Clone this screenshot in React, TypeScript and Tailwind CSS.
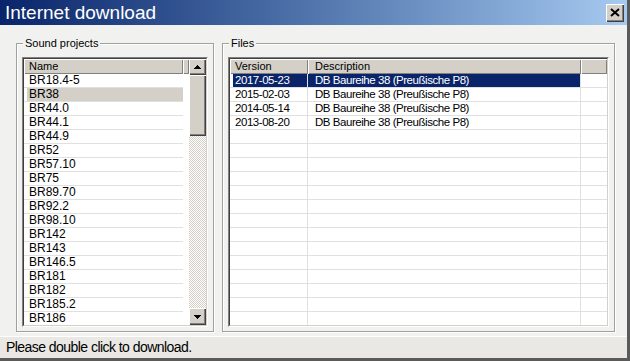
const PROJECTS = [
    'BR18.4-5', 'BR38', 'BR44.0', 'BR44.1', 'BR44.9', 'BR52', 'BR57.10', 'BR75', 'BR89.70',
    'BR92.2', 'BR98.10', 'BR142', 'BR143', 'BR146.5', 'BR181', 'BR182', 'BR185.2', 'BR186',
];

const FILES = [
    { version: '2017-05-23', desc: 'DB Baureihe 38 (Preußische P8)' },
    { version: '2015-02-03', desc: 'DB Baureihe 38 (Preußische P8)' },
    { version: '2014-05-14', desc: 'DB Baureihe 38 (Preußische P8)' },
    { version: '2013-08-20', desc: 'DB Baureihe 38 (Preußische P8)' },
];

// Classic raised bevel used by header cells and scroll buttons
const RAISED = 'bg-[#d4d0c8] shadow-[inset_1px_1px_0_#fff,inset_-1px_-1px_0_#404040,inset_-2px_-2px_0_#808080]';
const HEADER_CELL = 'bg-[#d4d0c8] shadow-[inset_1px_1px_0_#fff,inset_-1px_-1px_0_#808080] text-[11px] leading-[15px] text-black';

const Arrow = ({ up }: { up?: boolean }) => (
    <svg width="7" height="4" viewBox="0 0 7 4" shapeRendering="crispEdges">
        <polygon points={up ? '3.5,0 7,4 0,4' : '0,0 7,0 3.5,4'} fill="#000" />
    </svg>
);

const GroupBox = ({ label, className, children }: { label: string; className?: string; children: React.ReactNode }) => (
    <div className={`relative min-h-0 flex flex-col border border-[#a0a0a0] shadow-[inset_1px_1px_0_#fff,1px_1px_0_#fff] pt-[13px] pb-[4px] pl-[5px] ${className ?? ''}`}>
        <span className="absolute -top-[7px] left-[6px] px-[2px] bg-[#f1f1ef] text-[11px] leading-[13px] text-black">
            {label}
        </span>
        {children}
    </div>
);

const ListFrame = ({ children }: { children: React.ReactNode }) => (
    <div className="flex-1 min-h-0 flex border border-t-[#808080] border-l-[#808080] border-b-white border-r-white overflow-hidden">
        <div className="flex-1 min-h-0 flex border border-t-[#404040] border-l-[#404040] border-b-[#d4d0c8] border-r-[#d4d0c8] bg-white overflow-hidden">
            {children}
        </div>
    </div>
);

const SoundProjects = () => (
    <ListFrame>
        <div className="flex-1 min-h-0 flex flex-col overflow-hidden">
            <div className="flex h-[15px] shrink-0">
                <div className={`w-[159px] pl-[5px] ${HEADER_CELL}`}>Name</div>
                <div className={`flex-1 ${HEADER_CELL}`} />
            </div>
            {PROJECTS.map((name, i) => (
                <div key={name} className="flex h-[14px] shrink-0">
                    <div className="w-[159px] flex border-b border-[#e0e0e0]">
                        <div className={`ml-[3px] flex-1 pl-[2px] text-[12px] leading-[13px] text-black ${i === 1 ? 'bg-[#d4d0c8]' : ''}`}>
                            {name}
                        </div>
                    </div>
                </div>
            ))}
        </div>
        {/* vertical scrollbar */}
        <div className="w-[17px] min-h-0 flex flex-col shrink-0">
            <div className={`h-[16px] shrink-0 flex items-center justify-center ${RAISED}`}>
                <Arrow up />
            </div>
            <div className={`h-[61px] shrink-0 ${RAISED}`} />
            <div className="flex-1 bg-[repeating-conic-gradient(#d4d0c8_0%_25%,#fff_0%_50%)] bg-[length:2px_2px]" />
            <div className={`h-[17px] shrink-0 flex items-center justify-center ${RAISED}`}>
                <Arrow />
            </div>
        </div>
    </ListFrame>
);

const Files = () => (
    <ListFrame>
        <div className="flex-1 min-h-0 flex flex-col overflow-hidden">
            <div className="flex h-[15px] shrink-0">
                <div className={`w-[78px] pl-[5px] ${HEADER_CELL}`}>Version</div>
                <div className={`w-[273px] pl-[7px] ${HEADER_CELL}`}>Description</div>
                <div className={`flex-1 ${HEADER_CELL}`} />
            </div>
            {Array.from({ length: 20 }).map((_, i) => {
                const file = FILES[i];
                const selected = i === 0;
                return (
                    <div key={i} className="flex h-[14px] shrink-0 border-b border-[#e0e0e0] text-[11.5px] leading-[13px] tracking-[-0.45px]">
                        <div className="w-[78px] flex border-r border-[#e0e0e0]">
                            <div className={`ml-[3px] flex-1 pl-[2px] ${selected ? 'bg-[#0a246a] text-white' : 'text-black'}`}>
                                {file?.version}
                            </div>
                        </div>
                        <div className={`w-[273px] pl-[7px] border-r border-[#e0e0e0] ${selected ? 'bg-[#0a246a] text-white' : 'text-black'}`}>
                            {file?.desc}
                        </div>
                        <div className="flex-1" />
                    </div>
                );
            })}
        </div>
    </ListFrame>
);

export default function App() {
    return (
        <div className="w-[630px] h-[361px] flex flex-col bg-[#f1f1ef] border-r-[3px] border-b-[3px] border-[#5a5a5a] overflow-hidden font-['Liberation_Sans',Arial,sans-serif] select-none">
            {/* title bar */}
            <div className="h-[25px] shrink-0 flex items-center justify-between bg-linear-to-r from-[#0a246a] to-[#a6caf0] pl-[5px] pr-[3px]">
                <span className="text-[19px] leading-[22px] text-white">Internet download</span>
                <button className={`w-[18px] h-[18px] flex items-center justify-center ${RAISED}`}>
                    <svg width="10" height="9" viewBox="0 0 10 9">
                        <path d="M1 1 L9 8 M9 1 L1 8" stroke="#000" strokeWidth="2" />
                    </svg>
                </button>
            </div>

            {/* body */}
            <div className="flex-1 min-h-0 flex gap-[8px] pl-[16px] pr-[12px] pt-[18px] pb-[4px]">
                <GroupBox label="Sound projects" className="w-[198px] pr-[5px]">
                    <SoundProjects />
                </GroupBox>
                <GroupBox label="Files" className="w-[393px] pr-[5px]">
                    <Files />
                </GroupBox>
            </div>

            {/* status bar */}
            <div className="h-[22px] shrink-0 flex items-center pl-[6px] bg-[#e9e8e4] border-t border-white">
                <span className="text-[14px] tracking-[-0.55px] text-black">Please double click to download.</span>
            </div>
        </div>
    );
}
